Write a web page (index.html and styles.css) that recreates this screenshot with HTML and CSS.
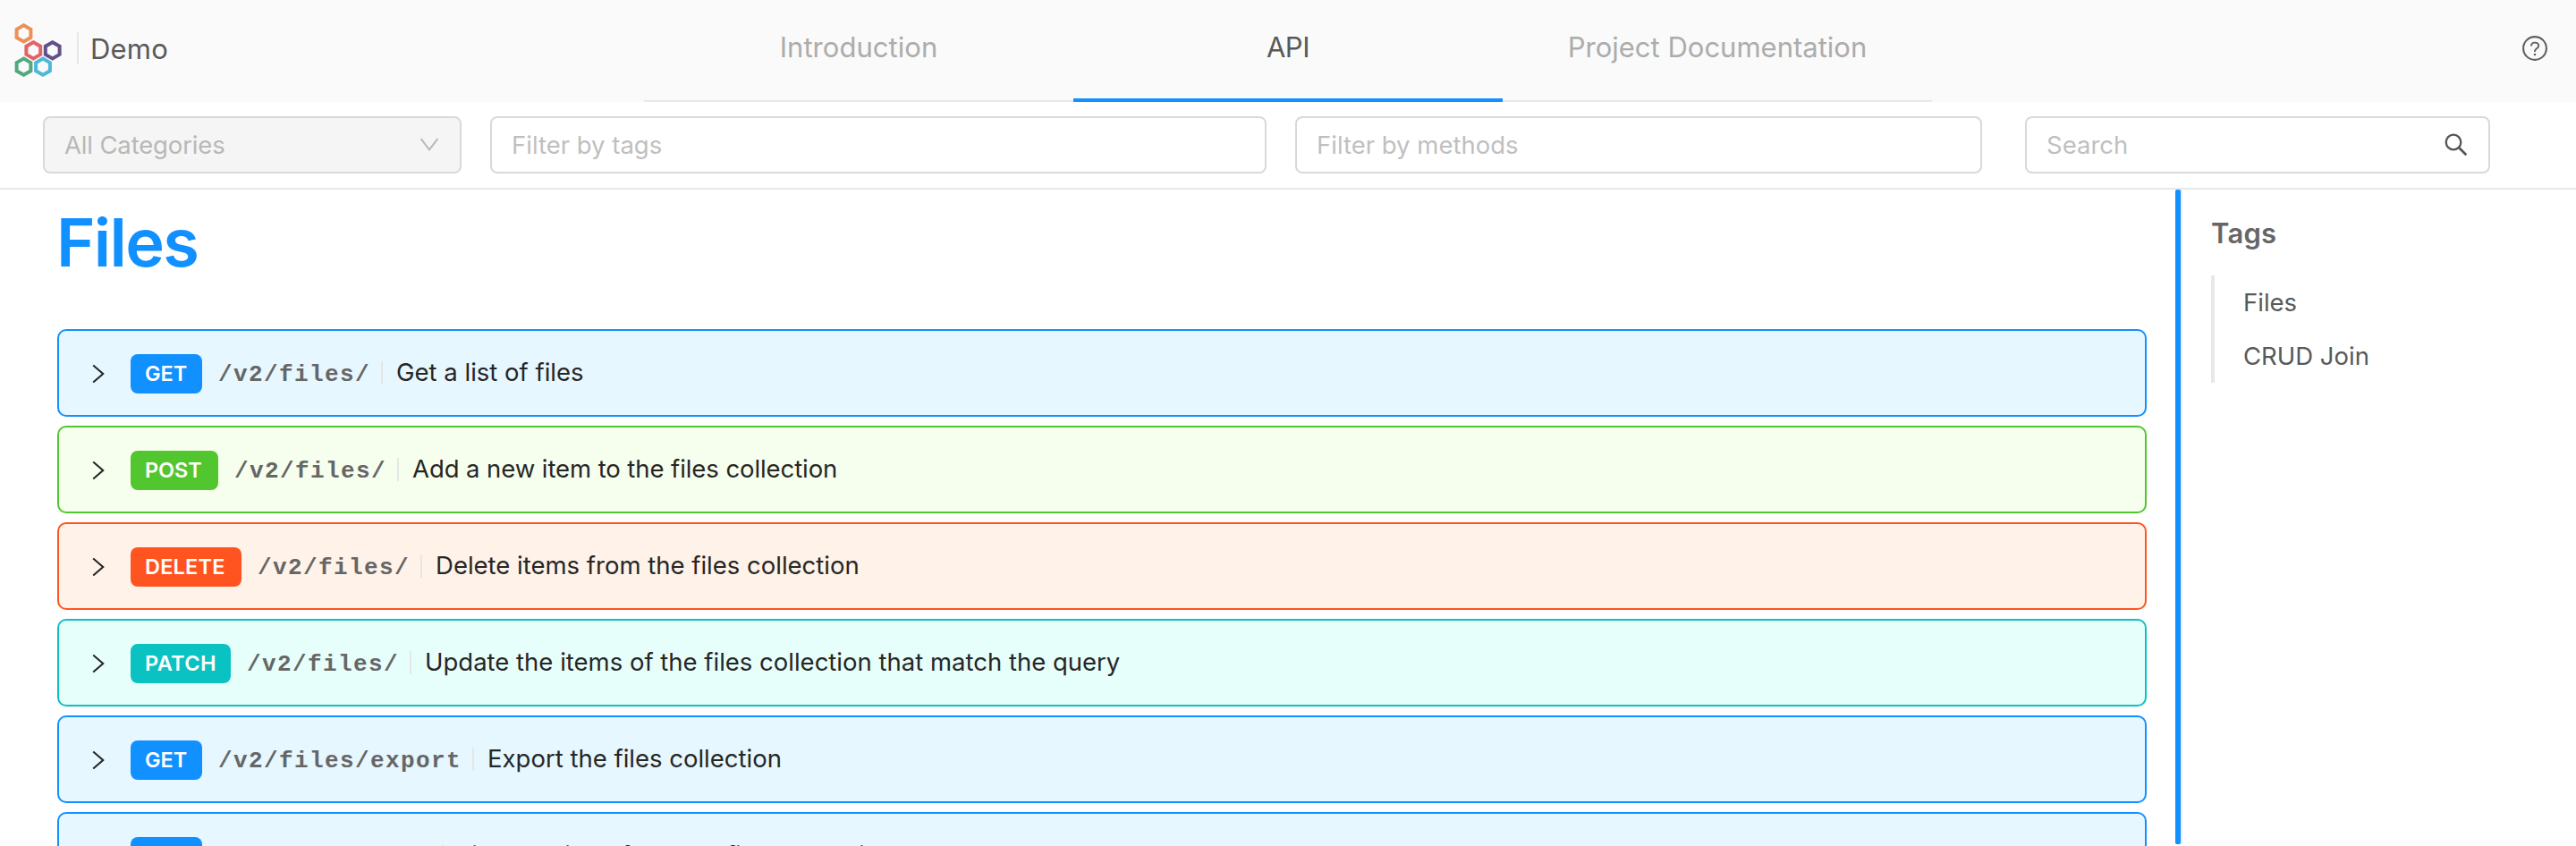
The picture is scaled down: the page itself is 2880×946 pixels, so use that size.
FILE: index.html
```
<!DOCTYPE html>
<html lang="en">
<head>
<meta charset="utf-8">
<title>Demo – API</title>
<link rel="stylesheet" href="styles.css">
</head>
<body>
<svg class="sprite" aria-hidden="true">
  <symbol id="chevron" viewBox="0 0 14 22"><path d="M1.2 1.5 L12.2 11 L1.2 20.5" fill="none" stroke="#262626" stroke-width="2.1"/></symbol>
</svg>
<header class="header">
  <div class="brand">
    <svg class="logo" width="56" height="62" viewBox="0 0 56 62" fill="none" stroke-width="4">
      <path stroke="#eb9059" d="M10.5 2.3 L18.4 6.8 V16 L10.5 20.5 L2.6 16 V6.8 Z"/>
      <path stroke="#e26465" d="M21.3 21.2 L29.2 25.7 V34.9 L21.3 39.4 L13.4 34.9 V25.7 Z"/>
      <path stroke="#61508b" d="M42.7 21.2 L50.6 25.7 V34.9 L42.7 39.4 L34.8 34.9 V25.7 Z"/>
      <path stroke="#52a97e" d="M10.5 39.6 L18.4 44.1 V53.3 L10.5 57.8 L2.6 53.3 V44.1 Z"/>
      <path stroke="#4db8da" d="M32 39.6 L39.9 44.1 V53.3 L32 57.8 L24.1 53.3 V44.1 Z"/>
    </svg>
    <span class="brand-rule"></span>
    <span class="brand-name">Demo</span>
  </div>
  <nav class="tabs">
    <a class="tab tab-intro">Introduction</a>
    <a class="tab tab-active">API</a>
    <a class="tab">Project Documentation</a>
  </nav>
  <svg class="help" width="28" height="28" viewBox="0 0 28 28" fill="none" stroke="#5f5f5f">
    <circle cx="14" cy="14" r="12.9" stroke-width="2.1"/>
    <path d="M9.9 11.6 C9.9 9 11.6 7.6 14 7.6 C16.4 7.6 18.2 9.1 18.2 11.3 C18.2 14.2 14 14.3 14 17.2 V18" stroke-width="1.9"/>
    <circle cx="14" cy="21" r="1.3" fill="#5f5f5f" stroke="none"/>
  </svg>
</header>

<div class="filters">
  <div class="field field-category">
    <span class="label-category">All Categories</span>
    <svg width="22" height="16" viewBox="0 0 22 16"><path d="M1.6 1.2 L11 13.4 L20.4 1.2" fill="none" stroke="#b8b8b8" stroke-width="2"/></svg>
  </div>
  <div class="field field-tags"><span class="label-tags">Filter by tags</span></div>
  <div class="field field-methods"><span>Filter by methods</span></div>
  <div class="field field-search">
    <span>Search</span>
    <svg width="26" height="26" viewBox="0 0 26 26" fill="none" stroke="#555"><circle cx="10" cy="10" r="8.3" stroke-width="2.3"/><path d="M16 16 L24.3 24.3" stroke-width="2.7"/></svg>
  </div>
</div>

<div class="layout">
  <main class="content">
    <h1 class="heading">Files</h1>
    <section class="rows">
      <div class="row get"><svg class="chevron"><use href="#chevron"/></svg><span class="badge">GET</span><code class="path">/v2/files/</code><span class="summary">Get a list of files</span></div>
      <div class="row post"><svg class="chevron"><use href="#chevron"/></svg><span class="badge">POST</span><code class="path">/v2/files/</code><span class="summary summary-add">Add a new item to the files collection</span></div>
      <div class="row delete"><svg class="chevron"><use href="#chevron"/></svg><span class="badge">DELETE</span><code class="path">/v2/files/</code><span class="summary">Delete items from the files collection</span></div>
      <div class="row patch"><svg class="chevron"><use href="#chevron"/></svg><span class="badge">PATCH</span><code class="path">/v2/files/</code><span class="summary">Update the items of the files collection that match the query</span></div>
      <div class="row get"><svg class="chevron"><use href="#chevron"/></svg><span class="badge">GET</span><code class="path">/v2/files/export</code><span class="summary">Export the files collection</span></div>
      <div class="row get"><svg class="chevron"><use href="#chevron"/></svg><span class="badge">GET</span><code class="path">/v2/files/{id}</code><span class="summary">Find one item from the files collection by ID</span></div>
    </section>
  </main>
  <div class="divider"></div>
  <aside class="sidebar">
    <h2 class="sidebar-title">Tags</h2>
    <ul class="tag-list">
      <li class="tag">Files</li>
      <li class="tag">CRUD Join</li>
    </ul>
  </aside>
</div>
</body>
</html>
```
FILE: styles.css
```
* { box-sizing: border-box; }

body {
  margin: 0;
  height: 946px;
  overflow: hidden;
  display: flex;
  flex-direction: column;
  background: #fff;
  color: #595959;
  font-family: Inter, "Liberation Sans", sans-serif;
  font-size: 27.5px;
}

.sprite { display: none; }

/* Header */
.header {
  flex: none;
  height: 114px;
  display: grid;
  grid-template-columns: 720px 1440px 720px;
  background: #fafafa;
}

.brand {
  display: flex;
  align-items: flex-start;
  padding-left: 16px;
}
.logo { margin-top: 26px; }
.brand-rule {
  width: 2px;
  height: 36px;
  margin: 36px 13px 0 14px;
  background: #e8e8e8;
}
.brand-name {
  margin-top: 35px;
  line-height: 40px;
  font-size: 31px;
  letter-spacing: 0.2px;
}

.tabs {
  display: grid;
  grid-template-columns: repeat(3, 1fr);
  height: 114px;
}
.tab {
  border-bottom: 2px solid #e8e8e8;
  line-height: 105px;
  text-align: center;
  font-size: 31px;
  color: #acacac;
}
.tab-intro { letter-spacing: 0.05px; }
.tab-active {
  border-bottom: 4px solid #1190ff;
  color: #595959;
  letter-spacing: -0.5px;
}

.help {
  justify-self: end;
  margin: 40px 32px 0 0;
}

/* Filters */
.filters {
  flex: none;
  height: 98px;
  display: flex;
  padding: 16px 96px 16px 48px;
  border-bottom: 2px solid #e8e8e8;
}
.field {
  height: 64px;
  display: flex;
  align-items: center;
  justify-content: space-between;
  padding-left: 22px;
  border: 2px solid #d9d9d9;
  border-radius: 8px;
  background: #fff;
  color: #bfbfbf;
  line-height: 60px;
}
.field-category {
  width: 468px;
  padding-right: 23px;
  background: #f5f5f5;
  color: #b8b8b8;
}
.label-category { letter-spacing: -0.15px; }
.field-tags { width: 868px; margin-left: 32px; }
.label-tags { letter-spacing: 0; }
.field-methods { width: 768px; margin-left: 32px; }
.field-search { width: 520px; margin-left: 48px; padding-right: 23px; }

/* Page body */
.layout {
  flex: 1;
  min-height: 0;
  display: grid;
  grid-template-columns: 2432px 8px 440px;
}

.content {
  overflow: hidden;
  padding: 0 32px 0 64px;
}
.heading {
  margin: 0 0 0 -1px;
  height: 156px;
  line-height: 118px;
  font-size: 74px;
  font-weight: 600;
  letter-spacing: -1.7px;
  color: #1190ff;
}

.rows {
  display: flex;
  flex-direction: column;
  gap: 10px;
}
.row {
  flex: none;
  height: 98px;
  display: flex;
  align-items: center;
  padding-left: 37px;
  border: 2px solid;
  border-radius: 10px;
}
.chevron {
  width: 14px;
  height: 22px;
  margin: 2px 29px 0 0;
}
.badge {
  height: 44px;
  margin: 2px 18px 0 0;
  padding-left: 16px;
  border-radius: 8px;
  line-height: 43px;
  font-size: 23.5px;
  font-weight: 600;
  color: #fff;
}
.path {
  margin: 4px 12px 0 0;
  font: 700 26px/34px "Liberation Mono", monospace;
  letter-spacing: 1.4px;
  color: #666;
}
.summary {
  position: relative;
  padding-left: 17px;
  line-height: 26px;
  margin-top: -2px;
  color: #262626;
}
.summary::before {
  content: "";
  position: absolute;
  left: 0;
  top: 1px;
  width: 2px;
  height: 26px;
  background: #e6e6e6;
}
.summary-add { letter-spacing: -0.08px; }

.get { border-color: #1190ff; background: #e6f7ff; }
.get .badge { width: 80px; background: #1190ff; letter-spacing: 0; }
.post { border-color: #52c62f; background: #f6ffed; }
.post .badge { width: 98px; background: #52c62f; letter-spacing: -0.1px; }
.delete { border-color: #ff5420; background: #fff2e8; }
.delete .badge { width: 124px; background: #ff5420; letter-spacing: 0.2px; }
.patch { border-color: #0ac2c2; background: #e6fffb; }
.patch .badge { width: 112px; background: #0ac2c2; letter-spacing: 0.4px; }

.divider {
  margin-bottom: 2px;
  width: 6px;
  border-radius: 2px;
  background: #1190ff;
  box-shadow: 2px 0 0 #e8e8e8;
}

/* Tags sidebar */
.sidebar { padding: 28px 0 0 32px; }
.sidebar-title {
  margin: 0;
  height: 68px;
  line-height: 41px;
  font-size: 31px;
  font-weight: 600;
  letter-spacing: 0.2px;
  color: #666;
}
.tag-list {
  margin: 0;
  padding: 0 0 0 32px;
  list-style: none;
  border-left: 4px solid #e8e8e8;
}
.tag {
  height: 60px;
  line-height: 60px;
}
```
